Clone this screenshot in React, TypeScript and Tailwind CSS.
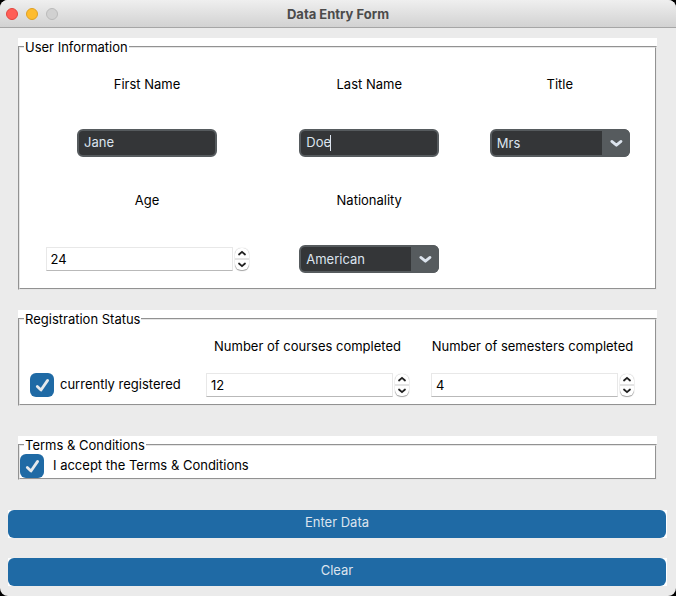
import { useId, useState } from "react";
import type { ReactNode } from "react";

function TitleBar() {
  return (
    <header className="relative flex h-7 shrink-0 items-center justify-center border-b border-[#a6a6a6] bg-linear-to-b from-[#efefef] to-[#d2d2d2]">
      <div className="absolute left-1.5 flex gap-2">
        <button type="button" aria-label="Close" className="size-3 rounded-full border border-[#e2463f] bg-[#ff5f57]" />
        <button type="button" aria-label="Minimize" className="size-3 rounded-full border border-[#dfa023] bg-[#febc2e]" />
        <button type="button" aria-label="Zoom" disabled className="size-3 rounded-full border border-[#bababa] bg-[#d1d1d1]" />
      </div>
      <h1 className="font-bold text-[#4b4b4b]">Data Entry Form</h1>
    </header>
  );
}

function Group({ title, children }: { title: string; children: ReactNode }) {
  return (
    <div className="bg-white">
      <fieldset className="min-w-0 border-2 border-[#e6e6e6] [border-style:groove]">
        <legend className="ml-1 px-px leading-[18px]">{title}</legend>
        {children}
      </fieldset>
    </div>
  );
}

function Field({ label, id, tight, children }: { label: string; id: string; tight?: boolean; children: ReactNode }) {
  return (
    <div className={tight ? "flex flex-col items-center gap-[11px]" : "flex flex-col items-center gap-[31px]"}>
      <label htmlFor={id} className="leading-7 whitespace-nowrap">
        {label}
      </label>
      <div className="flex h-7 items-center">{children}</div>
    </div>
  );
}

function TextField({ label, initial, caret }: { label: string; initial: string; caret?: boolean }) {
  const id = useId();
  const [value, setValue] = useState(initial);
  return (
    <Field label={label} id={id}>
      <div className="relative">
        <input
          id={id}
          type="text"
          value={value}
          onChange={(e) => setValue(e.target.value)}
          className="block h-7 w-[140px] rounded-md border-2 border-[#565b5e] bg-[#343638] px-[5px] pb-0.5 text-[#dce4ee] outline-none"
        />
        {caret && <span className="absolute top-[6px] left-[31px] h-4 w-px bg-[#dce4ee]" />}
      </div>
    </Field>
  );
}

function SelectField({ label, initial, options }: { label: string; initial: string; options: string[] }) {
  const id = useId();
  const [value, setValue] = useState(initial);
  return (
    <Field label={label} id={id}>
      <div className="relative">
        <select
          id={id}
          value={value}
          onChange={(e) => setValue(e.target.value)}
          className="block h-7 w-[140px] appearance-none rounded-md border-2 border-[#565b5e] bg-[#343638] pr-7 pl-[5px] text-[#dce4ee] outline-none"
        >
          {options.map((o) => (
            <option key={o}>{o}</option>
          ))}
        </select>
        <span className="pointer-events-none absolute inset-y-0 right-0 flex w-7 items-center justify-center rounded-r-md bg-[#565b5e]">
          <svg viewBox="0 0 14 10" className="h-2.5 w-3.5" fill="none" stroke="#dce4ee" strokeWidth="2.8" strokeLinecap="round" strokeLinejoin="round">
            <path d="M2.8 3.4 7.4 7.2 12 3.4" />
          </svg>
        </span>
      </div>
    </Field>
  );
}

function SpinField({ label, initial, tight }: { label: string; initial: number; tight?: boolean }) {
  const id = useId();
  const [value, setValue] = useState(initial);
  return (
    <Field label={label} id={id} tight={tight}>
      <div className="flex items-center gap-0.5">
        <input
          id={id}
          type="text"
          inputMode="numeric"
          value={value}
          onChange={(e) => setValue(Number(e.target.value) || 0)}
          className="h-6 w-[187px] border border-[#e8e8e8] border-b-[#b9b9b9] bg-white px-1 text-black outline-none"
        />
        <div className="flex h-[22px] w-3.5 flex-col divide-y-2 divide-[#e4e4e4] overflow-hidden rounded-md bg-white shadow-[0_1px_1px_#00000055,0_0_1px_#00000055]">
          <button type="button" aria-label={`Increase ${label}`} onClick={() => setValue(value + 1)} className="flex flex-1 items-center justify-center">
            <svg viewBox="0 0 10 8" className="h-2 w-2.5" fill="none" stroke="#222" strokeWidth="1.8" strokeLinecap="round" strokeLinejoin="round">
              <path d="M2 5.5 5 2.8l3 2.7" />
            </svg>
          </button>
          <button type="button" aria-label={`Decrease ${label}`} onClick={() => setValue(value - 1)} className="flex flex-1 items-center justify-center">
            <svg viewBox="0 0 10 8" className="h-2 w-2.5" fill="none" stroke="#222" strokeWidth="1.8" strokeLinecap="round" strokeLinejoin="round">
              <path d="M2 2.5 5 5.2l3-2.7" />
            </svg>
          </button>
        </div>
      </div>
    </Field>
  );
}

function CheckField({ label, wide }: { label: string; wide?: boolean }) {
  return (
    <label className={wide ? "flex items-center gap-[9px]" : "flex items-center gap-1.5"}>
      <span className="relative size-6 shrink-0">
        <input type="checkbox" defaultChecked className="peer block size-6 appearance-none rounded-md border-2 border-[#949a9f] checked:border-0 checked:bg-[#1f6aa5]" />
        <svg
          viewBox="0 0 24 24"
          className="pointer-events-none absolute inset-0 hidden size-6 peer-checked:block"
          fill="none"
          stroke="#e6e9ec"
          strokeWidth="2.8"
          strokeLinecap="round"
          strokeLinejoin="round"
        >
          <path d="M7.300 13.500 11 17 17.600 7.400" />
        </svg>
      </span>
      <span className="pb-0.5 whitespace-nowrap">{label}</span>
    </label>
  );
}

function ActionButton({ children, type }: { children: ReactNode; type: "submit" | "reset" }) {
  return (
    <div className="bg-white pr-px">
      <button type={type} className="block h-7 w-full rounded-md bg-[#1f6aa5] pb-1 text-center text-[#dce4ee]">
        {children}
      </button>
    </div>
  );
}

export default function App() {
  return (
    <div className="min-h-screen bg-black">
      <main className="flex min-h-screen flex-col overflow-hidden rounded-lg bg-[#ebebeb] font-['Inter','Liberation_Sans',sans-serif] text-[13px] leading-4 text-black">
        <TitleBar />
        <form className="flex flex-col gap-[30px] py-2.5" onSubmit={(e) => e.preventDefault()}>
          <div className="flex flex-col gap-[30px] pr-[19px] pl-[18px]">
            <div className="flex flex-col gap-5">
              <Group title="User Information">
                <div className="grid grid-cols-[4fr_3fr_3fr] gap-y-[29px] pt-[14px] pb-[15px]">
                  <TextField label="First Name" initial="Jane" />
                  <TextField label="Last Name" initial="Doe" caret />
                  <SelectField label="Title" initial="Mrs" options={["Mr", "Mrs", "Ms", "Dr"]} />
                  <SpinField label="Age" initial={24} />
                  <SelectField label="Nationality" initial="American" options={["American", "British", "Canadian"]} />
                </div>
              </Group>
              <Group title="Registration Status">
                <div className="grid grid-cols-[7fr_9fr_9fr] pt-1 pr-2.5 pb-[5px]">
                  <div className="flex items-end pb-0.5 pl-2.5">
                    <CheckField label="currently registered" />
                  </div>
                  <SpinField label="Number of courses completed" initial={12} tight />
                  <SpinField label="Number of semesters completed" initial={4} tight />
                </div>
              </Group>
            </div>
            <Group title="Terms & Conditions">
              <CheckField label="I accept the Terms & Conditions" wide />
            </Group>
          </div>
          <div className="flex flex-col gap-5 pr-[9px] pl-2">
            <ActionButton type="submit">Enter Data</ActionButton>
            <ActionButton type="reset">Clear</ActionButton>
          </div>
        </form>
      </main>
    </div>
  );
}
